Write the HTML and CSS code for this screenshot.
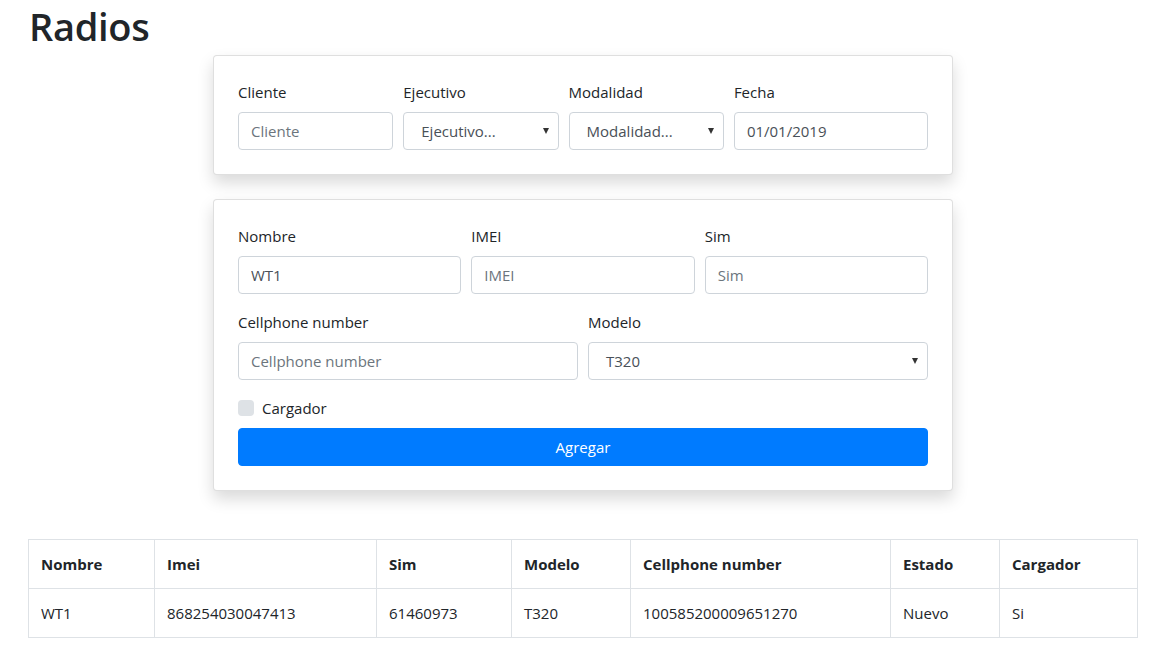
FILE: index.html
```html
<!DOCTYPE html>
<html lang="es">
<head>
<meta charset="utf-8">
<title>Radios</title>
<link rel="stylesheet" href="styles.css">
</head>
<body>
<div class="container">
  <h1 class="title">Radios</h1>

  <div class="card">
    <div class="grid grid-top">
      <div class="field">
        <label class="label">Cliente</label>
        <input class="input" type="text" placeholder="Cliente">
      </div>
      <div class="field">
        <label class="label">Ejecutivo</label>
        <div class="select">Ejecutivo...</div>
      </div>
      <div class="field">
        <label class="label">Modalidad</label>
        <div class="select">Modalidad...</div>
      </div>
      <div class="field">
        <label class="label">Fecha</label>
        <input class="input" type="text" value="01/01/2019">
      </div>
    </div>
  </div>

  <div class="card card-second">
    <div class="grid grid-three">
      <div class="field">
        <label class="label">Nombre</label>
        <input class="input" type="text" value="WT1">
      </div>
      <div class="field">
        <label class="label">IMEI</label>
        <input class="input" type="text" placeholder="IMEI">
      </div>
      <div class="field">
        <label class="label">Sim</label>
        <input class="input" type="text" placeholder="Sim">
      </div>
    </div>
    <div class="grid grid-two">
      <div class="field">
        <label class="label">Cellphone number</label>
        <input class="input" type="text" placeholder="Cellphone number">
      </div>
      <div class="field">
        <label class="label">Modelo</label>
        <div class="select">T320</div>
      </div>
    </div>
    <div class="check">
      <span class="check-box"></span>
      <span class="check-label">Cargador</span>
    </div>
    <button class="btn">Agregar</button>
  </div>

  <table class="table">
    <colgroup>
      <col style="width:126px"><col style="width:222px"><col style="width:135px"><col style="width:119px"><col style="width:260px"><col style="width:109px"><col>
    </colgroup>
    <thead>
      <tr><th>Nombre</th><th>Imei</th><th>Sim</th><th>Modelo</th><th>Cellphone number</th><th>Estado</th><th>Cargador</th></tr>
    </thead>
    <tbody>
      <tr><td>WT1</td><td>868254030047413</td><td>61460973</td><td>T320</td><td>100585200009651270</td><td>Nuevo</td><td>Si</td></tr>
    </tbody>
  </table>
</div>
</body>
</html>
```

FILE: styles.css
```css
* { box-sizing: border-box; }
html, body { margin: 0; padding: 0; background: #fff; }
body {
  font-family: "Open Sans", "Noto Sans", "Liberation Sans", sans-serif;
  font-size: 16px;
  line-height: 1.5;
  color: #212529;
}
.container {
  width: 1110px;
  margin-left: 28px;
}
.title {
  margin: 0 0 5px 1px;
  padding-top: 2px;
  font-size: 38px;
  font-weight: 600;
  line-height: 48px;
  letter-spacing: -0.3px;
}
.card {
  width: 740px;
  margin: 0 auto;
  background: #fff;
  border: 1px solid rgba(0,0,0,.125);
  border-radius: 4px;
  box-shadow: 0 8px 16px rgba(0,0,0,.15);
  padding: 24px;
}
.card-second { margin-top: 24px; }
.grid {
  display: grid;
  column-gap: 10px;
}
.grid-top { grid-template-columns: 4fr 4fr 4fr 5fr; }
.grid-three { grid-template-columns: 1fr 1fr 1fr; margin-bottom: 16px; }
.grid-two { grid-template-columns: 1fr 1fr; margin-bottom: 16px; }
.field { display: flex; flex-direction: column; min-width: 0; }
.label {
  display: block;
  margin-bottom: 8px;
  font-size: 15px;
  line-height: 24px;
}
.input, .select {
  display: block;
  width: 100%;
  height: 38px;
  padding: 6px 12px;
  font-family: inherit;
  font-size: 15px;
  line-height: 24px;
  color: #495057;
  background: #fff;
  border: 1px solid #ced4da;
  border-radius: 4px;
  outline: none;
}
.input::placeholder { color: #6c757d; opacity: 1; }
.select {
  position: relative;
  padding-left: 17px;
}
.select::after {
  content: "";
  position: absolute;
  right: 9px;
  top: 15px;
  border-left: 3px solid transparent;
  border-right: 3px solid transparent;
  border-top: 6px solid #333;
}
.check {
  display: flex;
  align-items: center;
  height: 24px;
  margin-bottom: 8px;
}
.check-box {
  width: 16px;
  height: 16px;
  background: #dee2e6;
  border-radius: 4px;
  margin-right: 8px;
}
.check-label { font-size: 15px; }
.btn {
  display: block;
  width: 100%;
  height: 38px;
  font-family: inherit;
  font-size: 15px;
  color: #fff;
  background: #007bff;
  border: 1px solid #007bff;
  border-radius: 4px;
}
.table {
  margin-top: 48px;
  width: 1110px;
  border-collapse: collapse;
  table-layout: fixed;
  font-size: 15px;
}
.table th, .table td {
  border: 1px solid #dee2e6;
  padding: 12px;
  line-height: 24px;
  text-align: left;
  vertical-align: top;
}
.table th { font-weight: 700; }
```
